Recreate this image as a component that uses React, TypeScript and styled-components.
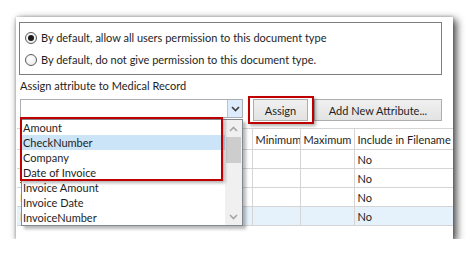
import React from 'react';
import styled, { createGlobalStyle } from 'styled-components';

const GlobalStyle = createGlobalStyle`
  body {
    margin: 0;
    background: #fff;
    font-family: Lato, 'Liberation Sans', sans-serif;
    font-size: 11px;
    color: #1e1e1e;
  }
`;

const Page = styled.div`
  padding: 17px 0 0 16px;
`;

const Panel = styled.div`
  position: relative;
  width: 437px;
  height: 222px;
  background: #fff;
  box-shadow: 3px 3px 8px rgba(0, 0, 0, 0.45), 0 0 3px rgba(0, 0, 0, 0.12);
  display: flex;
  flex-direction: column;
  overflow: hidden;
`;

const Frame = styled.div`
  position: relative;
  width: 437px;
  height: 222px;
  box-shadow: 3px 3px 8px rgba(0, 0, 0, 0.45), 0 0 3px rgba(0, 0, 0, 0.12);
`;

const GroupBox = styled.div`
  box-sizing: border-box;
  margin: 5px 0 0 3px;
  width: 423px;
  height: 53px;
  border: 1px solid #7d7d7d;
  padding: 9px 0 0 5px;
  display: flex;
  flex-direction: column;
  gap: 10px;
`;

const RadioRow = styled.label`
  display: flex;
  align-items: center;
  gap: 4px;
  height: 12px;
  line-height: 12px;
`;

const RadioCircle = styled.span<{ $checked?: boolean }>`
  box-sizing: border-box;
  width: 12px;
  height: 12px;
  border-radius: 50%;
  border: 1px solid #5a5a5a;
  background: radial-gradient(circle at 40% 35%, #ffffff 0%, #e6e6e6 100%);
  display: flex;
  align-items: center;
  justify-content: center;

  &::after {
    content: '';
    display: ${(p) => (p.$checked ? 'block' : 'none')};
    width: 6px;
    height: 6px;
    border-radius: 50%;
    background: #1a1a1a;
  }
`;

const Caption = styled.div`
  margin: 4px 0 0 4px;
  height: 14px;
  line-height: 14px;
`;

const ToolRow = styled.div`
  display: flex;
  align-items: flex-start;
  margin: 6px 0 0 4px;
`;

const Combo = styled.div`
  box-sizing: border-box;
  width: 223px;
  height: 19px;
  border: 1px solid #abadb3;
  background: #fff;
  display: flex;
  justify-content: flex-end;
`;

const ComboArrow = styled.div`
  box-sizing: border-box;
  width: 15px;
  height: 17px;
  background: #dcecfc;
  border-left: 1px solid #a8c8e8;
  display: flex;
  align-items: center;
  justify-content: center;
`;

const ButtonWrap = styled.div`
  position: relative;
  margin-left: 10px;
`;

const Button = styled.button<{ $width: number }>`
  box-sizing: border-box;
  width: ${(p) => p.$width}px;
  height: 22px;
  border: 1px solid #adadad;
  background: linear-gradient(#f0f0f0, #e3e3e3);
  font: inherit;
  color: #1e1e1e;
  padding: 0;
  margin: 0;
`;

const SecondButton = styled(Button)`
  margin-left: 6px;
`;

const Highlight = styled.div`
  position: absolute;
  box-sizing: border-box;
  border: 2px solid #be0000;
  box-shadow: 2px 2px 3px rgba(0, 0, 0, 0.3);
  pointer-events: none;
`;

const AssignHighlight = styled(Highlight)`
  left: -5px;
  top: -3px;
  width: 66px;
  height: 28px;
`;

const ListHighlight = styled(Highlight)`
  left: 4px;
  top: 100px;
  width: 203px;
  height: 64px;
`;

const Grid = styled.table`
  margin: 7px 0 0 1px;
  width: 436px;
  border-collapse: collapse;
  table-layout: fixed;
`;

const HeadCell = styled.th<{ $w: number }>`
  box-sizing: border-box;
  width: ${(p) => p.$w}px;
  height: 21px;
  padding: 0 0 0 3px;
  text-align: left;
  font-weight: normal;
  border-top: 1px solid #d5d5d5;
  border-bottom: 1px solid #d5d5d5;
  border-right: 1px solid #d5d5d5;
  white-space: nowrap;
  overflow: hidden;
`;

const Cell = styled.td<{ $sel?: boolean }>`
  box-sizing: border-box;
  height: 19px;
  padding: 0 0 0 3px;
  border-bottom: 1px solid #d5d5d5;
  border-right: 1px solid #d5d5d5;
  background: ${(p) => (p.$sel ? '#e5f1fb' : '#fff')};
  white-space: nowrap;
  overflow: hidden;
`;

const Dropdown = styled.div`
  position: absolute;
  left: 5px;
  top: 102px;
  box-sizing: border-box;
  width: 222px;
  height: 107px;
  border: 1px solid #828790;
  background: #fff;
  box-shadow: 3px 3px 3px rgba(0, 0, 0, 0.28);
  display: flex;
`;

const Items = styled.div`
  flex: 1;
`;

const Item = styled.div<{ $sel?: boolean }>`
  height: 15px;
  line-height: 15px;
  padding-left: 1px;
  background: ${(p) => (p.$sel ? '#cce4f7' : 'transparent')};
  white-space: nowrap;
`;

const ScrollBar = styled.div`
  width: 17px;
  background: #f0f0f0;
  display: flex;
  flex-direction: column;
`;

const ScrollArrow = styled.div`
  height: 17px;
  display: flex;
  align-items: center;
  justify-content: center;
`;

const Thumb = styled.div`
  margin: 0 1px;
  height: 26px;
  background: #cdcdcd;
`;

const Track = styled.div`
  flex: 1;
`;

const Chevron: React.FC<{ up?: boolean; color: string }> = ({ up, color }) => (
  <svg width="9" height="6" viewBox="0 0 9 6">
    <polyline
      points={up ? '1,5 4.5,1.5 8,5' : '1,1 4.5,4.5 8,1'}
      fill="none"
      stroke={color}
      strokeWidth="1.6"
    />
  </svg>
);

const columns = [
  { title: 'Name', w: 173 },
  { title: 'Default', w: 62 },
  { title: 'Minimum', w: 48 },
  { title: 'Maximum', w: 54 },
  { title: 'Include in Filename', w: 99 },
];

const rows = ['Invoice Number', 'Job Number', 'PO Number', 'Invoice Date'];

const items = [
  'Amount',
  'CheckNumber',
  'Company',
  'Date of Invoice',
  'Invoice Amount',
  'Invoice Date',
  'InvoiceNumber',
];

const App: React.FC = () => {
  return (
    <Page>
      <GlobalStyle />
      <Frame>
        <Panel>
          <GroupBox>
            <RadioRow>
              <RadioCircle $checked />
              By default, allow all users permission to this document type
            </RadioRow>
            <RadioRow>
              <RadioCircle />
              By default, do not give permission to this document type.
            </RadioRow>
          </GroupBox>

          <Caption>Assign attribute to Medical Record</Caption>

          <ToolRow>
            <Combo>
              <ComboArrow>
                <Chevron color="#3c3c3c" />
              </ComboArrow>
            </Combo>
            <ButtonWrap>
              <Button $width={55}>Assign</Button>
              <AssignHighlight />
            </ButtonWrap>
            <SecondButton $width={128}>Add New Attribute...</SecondButton>
          </ToolRow>

          <Grid>
            <thead>
              <tr>
                {columns.map((c) => (
                  <HeadCell key={c.title} $w={c.w}>
                    {c.title}
                  </HeadCell>
                ))}
              </tr>
            </thead>
            <tbody>
              {rows.map((name, i) => (
                <tr key={name}>
                  <Cell $sel={i === 3}>{name}</Cell>
                  <Cell $sel={i === 3}>Text</Cell>
                  <Cell $sel={i === 3} />
                  <Cell $sel={i === 3} />
                  <Cell $sel={i === 3}>No</Cell>
                </tr>
              ))}
            </tbody>
          </Grid>
        </Panel>

        <Dropdown>
          <Items>
            {items.map((it) => (
              <Item key={it} $sel={it === 'CheckNumber'}>
                {it}
              </Item>
            ))}
          </Items>
          <ScrollBar>
            <ScrollArrow>
              <Chevron up color="#a6a6a6" />
            </ScrollArrow>
            <Thumb />
            <Track />
            <ScrollArrow>
              <Chevron color="#a6a6a6" />
            </ScrollArrow>
          </ScrollBar>
        </Dropdown>
        <ListHighlight />
      </Frame>
    </Page>
  );
};

export default App;
